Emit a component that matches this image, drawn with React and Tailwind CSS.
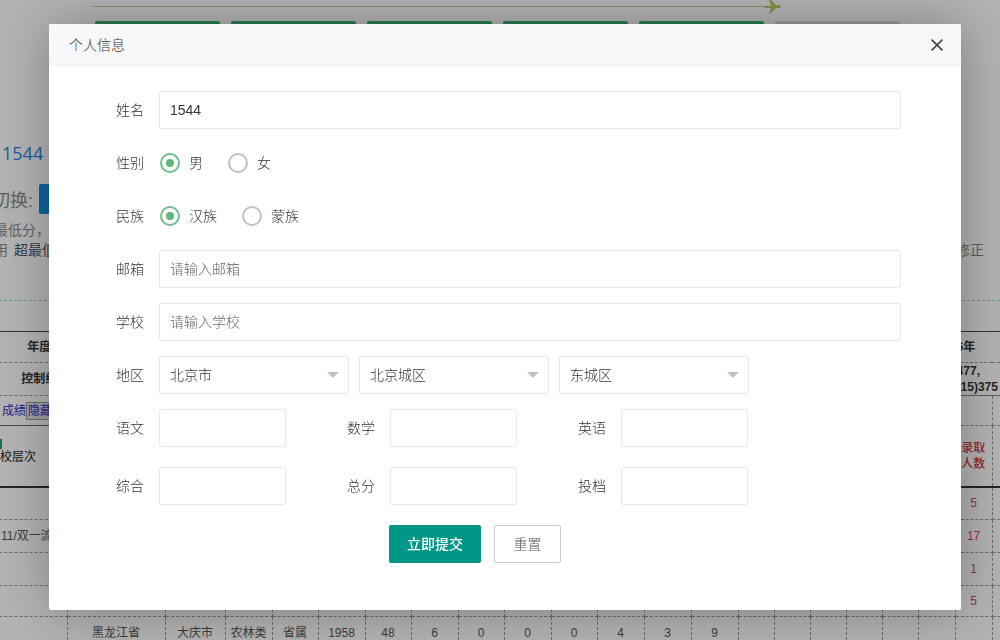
import { useState } from 'react'

const fieldClass =
  'h-[38px] rounded-xs border border-[#ebe6ee] bg-white px-2.5 text-sm text-[#333] placeholder-[#666] outline-none focus:border-[#d2d2d2]'

const cities = ['黑龙江省', '大庆市', '农林类', '省属', '1958', '48', '6', '0', '0', '0', '4', '3', '9', '', '', '', '', '', '', '', '']

const admitted = ['5', '17', '1', '5']

function Field({ id, label, wide = true, children }) {
  return (
    <div className="flex items-center">
      <label htmlFor={id} className={`${wide ? 'w-[110px]' : 'w-[104px]'} shrink-0 pr-[15px] text-right text-sm`}>
        {label}
      </label>
      {children}
    </div>
  )
}

function RadioGroup({ name, label, options }) {
  const [value, setValue] = useState(options[0])

  return (
    <div role="radiogroup" aria-labelledby={`${name}-label`} className="flex h-[38px] items-center">
      <span id={`${name}-label`} className="w-[110px] shrink-0 pr-[15px] text-right text-sm">
        {label}
      </span>
      <div className="flex gap-[25px] pl-px">
        {options.map((option) => (
          <label key={option} className="flex items-center gap-[9px] text-sm">
            <input
              type="radio"
              name={name}
              value={option}
              checked={value === option}
              onChange={() => setValue(option)}
              className="grid size-5 appearance-none place-items-center rounded-full border-2 border-[#c2bec4] before:size-2 before:rounded-full checked:border-[#6fbd8b] checked:before:bg-[#5FB878]"
            />
            {option}
          </label>
        ))}
      </div>
    </div>
  )
}

function Select({ id, label, options }) {
  return (
    <div className="relative w-[190px]">
      <select id={id} aria-label={label} className={`${fieldClass} w-full appearance-none`}>
        {options.map((option) => (
          <option key={option}>{option}</option>
        ))}
      </select>
      <svg viewBox="0 0 12 6" className="pointer-events-none absolute top-4 right-2.5 h-1.5 w-3 fill-[#c2c2c2]">
        <path d="M0 0h12L6 6z" />
      </svg>
    </div>
  )
}

function ScoreRow({ scores }) {
  return (
    <div className="flex">
      {scores.map(([id, label], i) => (
        <Field key={id} id={id} label={label} wide={i === 0}>
          <input id={id} type="text" className={`${fieldClass} w-[127px]`} />
        </Field>
      ))}
    </div>
  )
}

function ResultTable() {
  const cell = 'border-b border-r border-dashed border-[#999] p-0'
  const lastCell = 'border-b border-dashed border-[#999] p-0'

  return (
    <table className="w-full table-fixed border-collapse text-center text-xs text-[#555]">
      <colgroup>
        <col className="w-[83px]" />
        <col className="w-[98px]" />
        <col className="w-[60px]" />
        <col className="w-[47px]" />
        <col className="w-[46px]" />
        <col className="w-[47px]" />
        <col className="w-[46px]" />
        <col className="w-[47px]" />
        <col className="w-[46px]" />
        <col className="w-[47px]" />
        <col className="w-[46px]" />
        <col className="w-[47px]" />
        <col className="w-[47px]" />
        <col className="w-[47px]" />
        <col className="w-[36px]" />
        <col className="w-[36px]" />
        <col className="w-[36px]" />
        <col className="w-[36px]" />
        <col className="w-[36px]" />
        <col className="w-[37px]" />
        <col className="w-[37px]" />
        <col />
      </colgroup>
      <tbody>
        <tr className="h-[31px] border-t border-[#444] font-bold text-[#333]">
          <td className={`${cell} pl-7`}>年度</td>
          <td className={cell} colSpan={19} />
          <td className={`${lastCell} pl-px text-left whitespace-nowrap`} colSpan={2}>
            6年
          </td>
        </tr>
        <tr className="h-[33px] font-bold text-[#333]">
          <td className={`${cell} pl-7 whitespace-nowrap`}>控制线</td>
          <td className={cell} colSpan={19} />
          <td className="border-b border-[#888] p-0 pl-px text-left leading-4 whitespace-nowrap" colSpan={2}>
            477,
            <br />
            (15)375
          </td>
        </tr>
        <tr className="h-[30px]">
          <td className="border-b border-[#666] p-0 pl-[18px] text-left whitespace-nowrap text-[#2a1fd0]">
            成绩
            <button type="button" className="border border-[#999] bg-[#e4e4e4] px-px">
              隐藏
            </button>
          </td>
          <td className={cell} colSpan={19} />
          <td className={cell} />
          <td className={lastCell} />
        </tr>
        <tr className="h-[61px] border-b-2 border-[#333]">
          <td className="border-r border-dashed border-r-[#999] p-0 pb-2 pl-4 text-left text-[#222]">
            <div className="h-2.5 w-0.5 bg-[#2f9e5b]" />
            校层次
          </td>
          <td className="p-0" colSpan={19} />
          <td className="border-r border-dashed border-r-[#999] p-0 leading-4 font-medium text-[#d03a3a]">
            录取
            <br />
            人数
          </td>
          <td className="p-0" />
        </tr>
        {admitted.map((count, i) => (
          <tr key={i} className={i === 3 ? 'h-[31px]' : 'h-[33px]'}>
            <td className={`${cell} pl-[17px] text-left whitespace-nowrap`}>{i === 1 && '11/双一流'}</td>
            {cities.slice(0, 19).map((_, n) => (
              <td key={n} className={cell} />
            ))}
            <td className={`${cell} text-[#d04a55]`}>{count}</td>
            <td className={lastCell} />
          </tr>
        ))}
        <tr className="h-[33px]">
          <td className={cell} />
          {cities.map((text, n) => (
            <td key={n} className={n === 20 ? lastCell : cell}>
              {text}
            </td>
          ))}
        </tr>
      </tbody>
    </table>
  )
}

function ScorePage() {
  return (
    <div className="-ml-4 bg-white text-[#888]">
      <div className="h-[140px] pl-[109px]">
        <div className="flex h-[13px] items-center">
          <div className="h-px w-[672px] bg-[#c9c9a0]" />
          <svg viewBox="0 0 16 14" className="h-3.5 w-4 fill-[#c3c765]">
            <path d="M0 6h6L4 0h2l5 5h4l1 2-1 1h-4l-6 6H4l2-6H0z" />
          </svg>
        </div>
        <ul className="mt-2 flex gap-[11px] pl-0.5">
          <li className="h-8 w-[125px] shrink-0 rounded-xs bg-[#3cb371]" />
          <li className="h-8 w-[125px] shrink-0 rounded-xs bg-[#3cb371]" />
          <li className="h-8 w-[125px] shrink-0 rounded-xs bg-[#3cb371]" />
          <li className="h-8 w-[125px] shrink-0 rounded-xs bg-[#3cb371]" />
          <li className="h-8 w-[125px] shrink-0 rounded-xs bg-[#3cb371]" />
          <li className="h-8 w-[125px] shrink-0 rounded-xs bg-[#dcdcdc]" />
        </ul>
      </div>
      <h1 className="h-11 pl-[18px] font-['Open_Sans'] text-lg leading-[26px] text-[#2d85dd]">1544</h1>
      <div className="flex h-[30px] items-center gap-1.5 pl-2 text-lg">
        <span className="pt-1">切换:</span>
        <button type="button" className="h-[30px] w-16 rounded-xs bg-[#1390e0]" aria-label="切换" />
      </div>
      <p className="mt-1.5 pl-2.5 text-sm leading-5">最低分，</p>
      <div className="flex justify-between pr-4 pl-2.5 text-sm leading-5">
        <p className="flex gap-1.5">
          用 <span className="text-[#45566e]">超最低</span>
        </p>
        <p>修正</p>
      </div>
      <div className="mt-10 mb-[30px] border-t border-dashed border-[#8fd5cf]" />
      <ResultTable />
    </div>
  )
}

function App() {
  return (
    <div className="h-screen overflow-hidden bg-white font-['Liberation_Sans','Noto_Sans_CJK_SC',sans-serif]">
      <ScorePage />

      <div className="fixed inset-0 bg-black/30 pt-6 pr-[39px] pl-[49px]">
        <section
          role="dialog"
          aria-labelledby="dialog-title"
          className="rounded-xs bg-white font-light text-[#333] shadow-[1px_1px_50px_rgba(0,0,0,0.3)]"
        >
          <header className="flex h-[42px] items-center justify-between rounded-t-xs border-b border-[#f0eff2] bg-[#f8f7f9] pr-[18px] pl-5">
            <h2 id="dialog-title" className="text-sm">
              个人信息
            </h2>
            <button type="button" aria-label="关闭">
              <svg viewBox="0 0 12 12" className="size-3 stroke-[#444]" strokeWidth="1.6">
                <path d="M.6.6l10.8 10.8M11.4.6L.6 11.4" />
              </svg>
            </button>
          </header>

          <form className="flex flex-col gap-[15px] pt-[25px] pb-[47px]" onSubmit={(e) => e.preventDefault()}>
            <Field id="name" label="姓名">
              <input id="name" type="text" defaultValue="1544" className={`${fieldClass} mr-[60px] grow`} />
            </Field>
            <RadioGroup name="sex" label="性别" options={['男', '女']} />
            <RadioGroup name="nation" label="民族" options={['汉族', '蒙族']} />
            <Field id="email" label="邮箱">
              <input id="email" type="text" placeholder="请输入邮箱" className={`${fieldClass} mr-[60px] grow`} />
            </Field>
            <Field id="school" label="学校">
              <input id="school" type="text" placeholder="请输入学校" className={`${fieldClass} mr-[60px] grow`} />
            </Field>
            <Field id="province" label="地区">
              <div className="flex gap-2.5">
                <Select id="province" label="地区" options={['北京市']} />
                <Select id="city" label="城市" options={['北京城区']} />
                <Select id="district" label="区县" options={['东城区']} />
              </div>
            </Field>
            <div className="flex flex-col gap-5">
              <ScoreRow scores={[['chinese', '语文'], ['math', '数学'], ['english', '英语']]} />
              <ScoreRow scores={[['general', '综合'], ['total', '总分'], ['filing', '投档']]} />
              <div className="flex gap-[13px] pl-[340px] text-sm">
                <button type="submit" className="h-[38px] w-[92px] rounded-xs bg-[#009688] font-medium text-white">
                  立即提交
                </button>
                <button type="reset" className="h-[38px] w-[67px] rounded-xs border border-[#cfcad0] bg-white text-[#555]">
                  重置
                </button>
              </div>
            </div>
          </form>
        </section>
      </div>
    </div>
  )
}

export default App
